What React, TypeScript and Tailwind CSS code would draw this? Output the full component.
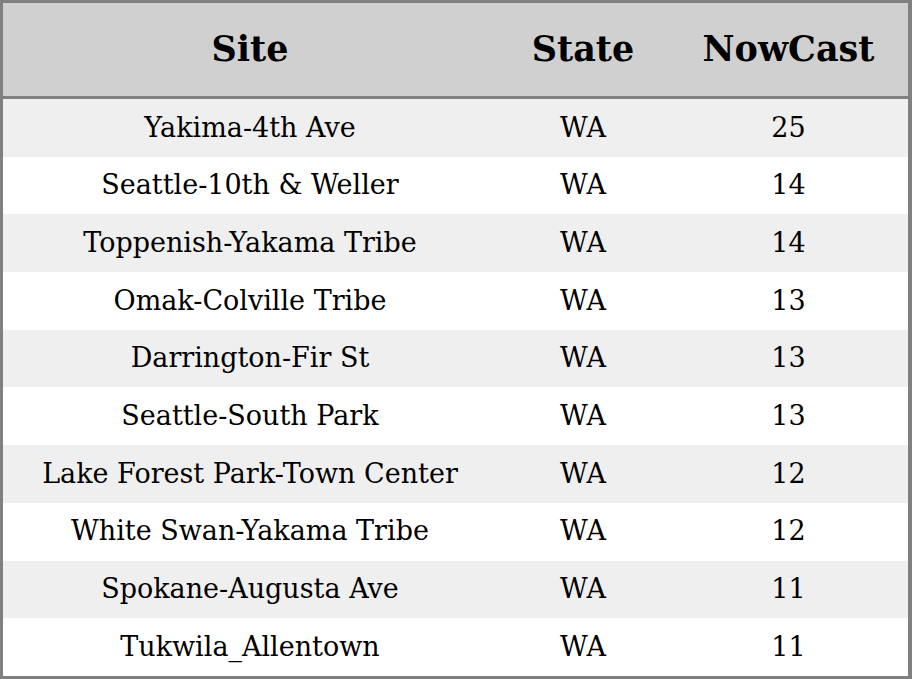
import React from "react";

const rows: [string, string, number][] = [
  ["Yakima-4th Ave", "WA", 25],
  ["Seattle-10th & Weller", "WA", 14],
  ["Toppenish-Yakama Tribe", "WA", 14],
  ["Omak-Colville Tribe", "WA", 13],
  ["Darrington-Fir St", "WA", 13],
  ["Seattle-South Park", "WA", 13],
  ["Lake Forest Park-Town Center", "WA", 12],
  ["White Swan-Yakama Tribe", "WA", 12],
  ["Spokane-Augusta Ave", "WA", 11],
  ["Tukwila_Allentown", "WA", 11],
];

export default function App() {
  return (
    <div
      className="w-[912px] h-[679px] overflow-hidden bg-white text-black"
      style={{ fontFamily: '"DejaVu Serif", serif' }}
    >
      <div className="border-[3px] border-r-[4px] border-[#808080]">
        <div className="grid grid-cols-[494px_172px_1fr] h-[96px] items-center bg-[#d0d0d0] border-b-[3px] border-[#808080] text-[35px] font-bold">
          <div className="text-center">Site</div>
          <div className="text-center">State</div>
          <div className="text-center">NowCast</div>
        </div>
        {rows.map(([site, state, val], i) => (
          <div
            key={site}
            className={`grid grid-cols-[494px_172px_1fr] h-[57.7px] items-center text-[27px] ${
              i % 2 === 0 ? "bg-[#efefef]" : "bg-white"
            }`}
          >
            <div className="text-center">{site}</div>
            <div className="text-center">{state}</div>
            <div className="text-center">{val}</div>
          </div>
        ))}
      </div>
    </div>
  );
}
